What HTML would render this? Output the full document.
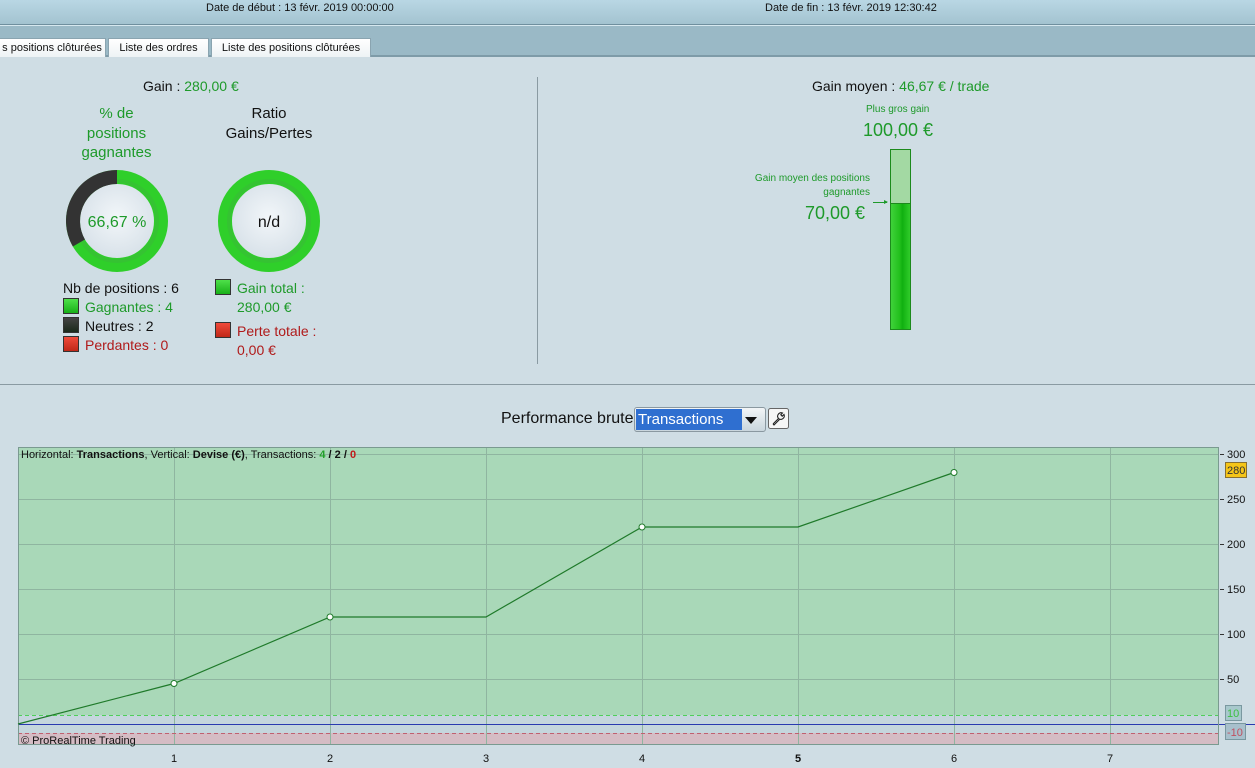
<!DOCTYPE html>
<html><head><meta charset="utf-8"><style>
*{margin:0;padding:0;box-sizing:border-box}
body{width:1255px;height:768px;overflow:hidden;background:#cfdde4;font-family:"Liberation Sans",sans-serif;position:relative;color:#111}
.a{position:absolute;white-space:nowrap}
.g{color:#1e9a2a}
.r{color:#b01a1a}
.top{left:0;top:0;width:1255px;height:24px;background:linear-gradient(#b9d7e4,#a3c3d0)}
.tabbar{left:0;top:24px;width:1255px;height:33px;background:#9ab9c6;border-top:1px solid #6f8f9e;border-bottom:2px solid #7e9ba8;box-shadow:inset 0 1px 0 #d6e8ef}
.tab{top:38px;height:19px;background:linear-gradient(#ffffff,#eef3f5);border:1px solid #8aa4b0;border-bottom:none;font-size:11px;line-height:18px;text-align:center}
.sq{display:inline-block;width:16px;height:16px;vertical-align:-2px;margin-right:6px;border:1px solid #333}
</style></head><body>
<div class="a top"></div>
<div class="a" style="left:206px;top:2px;font-size:11px">Date de début :  13 févr. 2019 00:00:00</div>
<div class="a" style="left:765px;top:2px;font-size:11px">Date de fin :  13 févr. 2019 12:30:42</div>
<div class="a tabbar"></div>
<div class="a tab" style="left:-2px;width:108px">s positions clôturées</div>
<div class="a tab" style="left:108px;width:101px">Liste des ordres</div>
<div class="a tab" style="left:211px;width:160px">Liste des positions clôturées</div>

<div class="a" style="left:143px;top:78px;font-size:14px">Gain : <span class="g">280,00 €</span></div>
<div class="a g" style="left:70px;top:104px;width:93px;text-align:center;font-size:15px;line-height:19.5px;white-space:normal">% de positions gagnantes</div>
<div class="a" style="left:210px;top:104px;width:118px;text-align:center;font-size:15px;line-height:19.5px;white-space:normal">Ratio Gains/Pertes</div>
<svg class="a" style="left:0;top:160px" width="340" height="120" viewBox="0 160 340 120">
<defs><radialGradient id="rg" cx="50%" cy="45%" r="60%"><stop offset="0" stop-color="#f2f6f9"/><stop offset="1" stop-color="#d6e0e8"/></radialGradient></defs>
<circle cx="117" cy="221" r="37" fill="url(#rg)"/>
<circle cx="117" cy="221" r="44" fill="none" stroke="#2fcf2a" stroke-width="14"/>
<circle cx="117" cy="221" r="40" fill="none" stroke="#3cb83a" stroke-width="4" opacity=".5"/>
<path d="M117 177 A44 44 0 0 0 78.9 243" fill="none" stroke="#333" stroke-width="14"/>
<circle cx="269" cy="221" r="37" fill="url(#rg)"/>
<circle cx="269" cy="221" r="44" fill="none" stroke="#2fcf2a" stroke-width="14"/>
<circle cx="269" cy="221" r="40" fill="none" stroke="#3cb83a" stroke-width="4" opacity=".5"/>
<text x="117" y="227" text-anchor="middle" font-size="16" fill="#1e9a2a" font-family="Liberation Sans">66,67 %</text>
<text x="269" y="227" text-anchor="middle" font-size="16" fill="#111" font-family="Liberation Sans">n/d</text>
</svg>
<div class="a" style="left:63px;top:279px;font-size:14px;line-height:19px">Nb de positions : 6<br>
<span class="sq" style="background:linear-gradient(#4fe04a,#18b018)"></span><span class="g">Gagnantes : 4</span><br>
<span class="sq" style="background:linear-gradient(#444,#1a2a1a)"></span>Neutres : 2<br>
<span class="sq" style="background:linear-gradient(#f04a3a,#c02818)"></span><span class="r">Perdantes : 0</span></div>
<div class="a" style="left:215px;top:279px;font-size:14px;line-height:19px"><span class="sq" style="background:linear-gradient(#4fe04a,#18b018)"></span><span class="g">Gain total :</span><br><span class="g" style="margin-left:22px">280,00 €</span></div>
<div class="a" style="left:215px;top:322px;font-size:14px;line-height:19px"><span class="sq" style="background:linear-gradient(#f04a3a,#c02818)"></span><span class="r">Perte totale :</span><br><span class="r" style="margin-left:22px">0,00 €</span></div>

<div class="a" style="left:537px;top:77px;width:1px;height:287px;background:#8a9aa2"></div>

<div class="a" style="left:812px;top:78px;font-size:14px">Gain moyen : <span class="g">46,67 € / trade</span></div>
<div class="a g" style="left:866px;top:104px;font-size:10px">Plus gros gain</div>
<div class="a g" style="left:863px;top:120px;font-size:18px">100,00 €</div>
<div class="a g" style="left:738px;top:172px;width:132px;text-align:right;font-size:10px;line-height:14px;white-space:normal">Gain moyen des positions gagnantes</div>
<div class="a g" style="left:805px;top:203px;font-size:18px">70,00 €</div>
<div class="a" style="left:873px;top:202px;width:14px;height:1px;background:#1e9a2a"></div>
<div class="a" style="left:884px;top:200px;width:0;height:0;border-top:2.5px solid transparent;border-bottom:2.5px solid transparent;border-left:4px solid #1e9a2a"></div>
<div class="a" style="left:890px;top:149px;width:21px;height:181px;border:1px solid #1c8a1c;background:#a3d9a3"></div>
<div class="a" style="left:891px;top:203px;width:19px;height:126px;border-top:1px solid #1c8a1c;background:linear-gradient(90deg,#3fd23a,#22c01d 45%,#10b010 60%,#30cc2a)"></div>

<div class="a" style="left:0;top:384px;width:1255px;height:1px;background:#8a9aa2"></div>
<div class="a" style="left:501px;top:410px;font-size:16px">Performance brute</div>
<div class="a" style="left:634px;top:407px;width:132px;height:25px;border:1px solid #8a98a0;border-radius:3px;background:linear-gradient(#f2f5f7,#c9d6dd)"></div>
<div class="a" style="left:636px;top:409px;width:106px;height:21px;background:#2f6fd0;color:#fff;font-size:15px;line-height:21px;padding-left:2px">Transactions</div>
<div class="a" style="left:745px;top:410px;width:0;height:0;border-left:6px solid transparent;border-right:6px solid transparent;border-top:7px solid #111;margin-top:7px"></div>
<svg class="a" style="left:768px;top:408px" width="21" height="21" viewBox="0 0 21 21">
<rect x="0.5" y="0.5" width="20" height="20" rx="2" fill="#f6f6f6" stroke="#666"/>
<path d="M5 16 L10.5 10.5 A3.5 3.5 0 0 1 14.5 5 L12.8 6.8 L14.2 8.2 L16 6.5 A3.5 3.5 0 0 1 10.5 10.5 M5 16 L6 17 L11.5 11.5" fill="none" stroke="#222" stroke-width="1.1"/>
</svg>

<svg class="a" style="left:0;top:440px" width="1255" height="328" viewBox="0 440 1255 328">
<rect x="18" y="447" width="1201" height="268" fill="#a9d8b8"/>
<rect x="18" y="715" width="1201" height="18" fill="#c5d6dd"/>
<rect x="18" y="733" width="1201" height="12" fill="#d5bcc4"/>
<g stroke="#8fb5a0" stroke-width="1">
<line x1="18" y1="454.5" x2="1219" y2="454.5"/><line x1="18" y1="499.5" x2="1219" y2="499.5"/><line x1="18" y1="544.5" x2="1219" y2="544.5"/><line x1="18" y1="589.5" x2="1219" y2="589.5"/><line x1="18" y1="634.5" x2="1219" y2="634.5"/><line x1="18" y1="679.5" x2="1219" y2="679.5"/>
<line x1="174.5" y1="447" x2="174.5" y2="745"/><line x1="330.5" y1="447" x2="330.5" y2="745"/><line x1="486.5" y1="447" x2="486.5" y2="745"/><line x1="642.5" y1="447" x2="642.5" y2="745"/><line x1="798.5" y1="447" x2="798.5" y2="745"/><line x1="954.5" y1="447" x2="954.5" y2="745"/><line x1="1110.5" y1="447" x2="1110.5" y2="745"/>
</g>
<line x1="18" y1="715.5" x2="1219" y2="715.5" stroke="#4fcf5a" stroke-dasharray="4,3"/>
<line x1="18" y1="733.5" x2="1219" y2="733.5" stroke="#c06070" stroke-dasharray="4,3"/>
<line x1="18" y1="724.5" x2="1255" y2="724.5" stroke="#2a3ab0"/>
<rect x="18.5" y="447.5" width="1200" height="297" fill="none" stroke="#7a9a90"/>
<polyline points="18,724 174,683.5 330,617 486,617 642,527 798,527 954,472.5" fill="none" stroke="#1f7a2a" stroke-width="1.2"/>
<g fill="#fff" stroke="#1f7a2a"><circle cx="174" cy="683.5" r="3"/><circle cx="330" cy="617" r="3"/><circle cx="642" cy="527" r="3"/><circle cx="954" cy="472.5" r="3"/></g>
<g font-family="Liberation Sans" font-size="11" fill="#111">
<text x="21" y="458">Horizontal: <tspan font-weight="bold">Transactions</tspan>, Vertical: <tspan font-weight="bold">Devise (€)</tspan>, Transactions: <tspan font-weight="bold" fill="#22a02a">4</tspan><tspan font-weight="bold"> / 2 / </tspan><tspan font-weight="bold" fill="#c01a1a">0</tspan></text>
<text x="21" y="744">© ProRealTime Trading</text>
<text x="1227" y="458">300</text><text x="1227" y="503">250</text><text x="1227" y="548">200</text><text x="1227" y="593">150</text><text x="1227" y="638">100</text><text x="1227" y="683">50</text>
<text x="171" y="762">1</text><text x="327" y="762">2</text><text x="483" y="762">3</text><text x="639" y="762">4</text><text x="795" y="762" font-weight="bold">5</text><text x="951" y="762">6</text><text x="1107" y="762">7</text>
</g>
<g stroke="#333"><line x1="1220" y1="454.5" x2="1224" y2="454.5"/><line x1="1220" y1="499.5" x2="1224" y2="499.5"/><line x1="1220" y1="544.5" x2="1224" y2="544.5"/><line x1="1220" y1="589.5" x2="1224" y2="589.5"/><line x1="1220" y1="634.5" x2="1224" y2="634.5"/><line x1="1220" y1="679.5" x2="1224" y2="679.5"/></g>
<rect x="1225.5" y="462.5" width="21" height="15" fill="#f5c518" stroke="#887030"/>
<text x="1227" y="474" font-family="Liberation Sans" font-size="11" fill="#333">280</text>
<rect x="1225.5" y="705.5" width="16" height="15" fill="#a8c8cc" stroke="#7a98a0"/>
<text x="1227" y="717" font-family="Liberation Sans" font-size="11" fill="#3cc040">10</text>
<rect x="1225.5" y="723.5" width="20" height="16" fill="#a8c0cc" stroke="#7a98a0"/>
<text x="1227" y="736" font-family="Liberation Sans" font-size="11" fill="#c05060">-10</text>
</svg>
</body></html>
